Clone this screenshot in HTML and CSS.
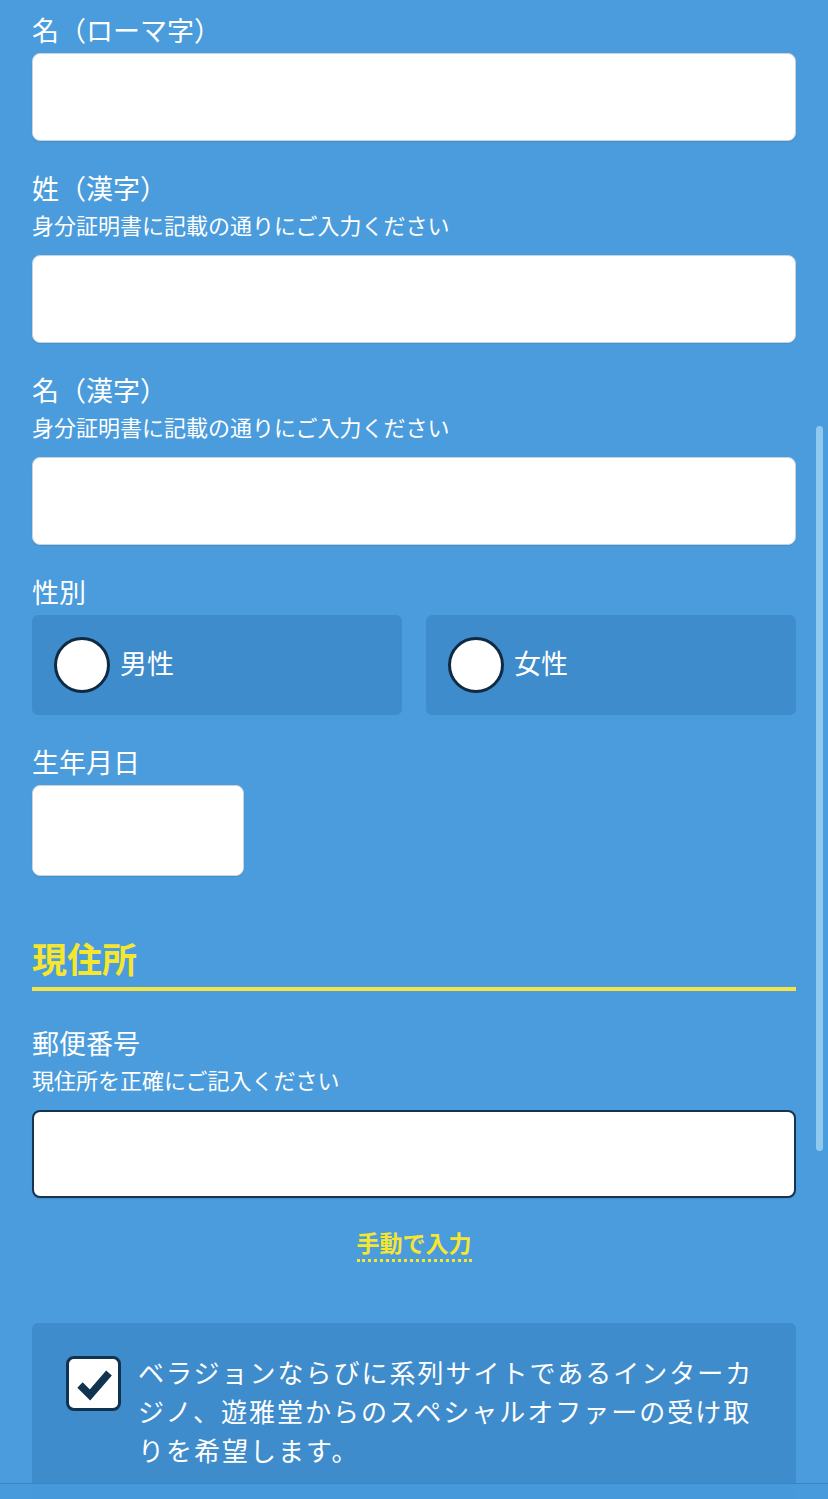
FILE: index.html
```html
<!DOCTYPE html>
<html lang="ja">
<head>
    <meta charset="UTF-8">
    <meta name="viewport" content="width=device-width, initial-scale=1.0">
    <title>登録フォーム</title>
    <link rel="stylesheet" href="styles.css">
</head>
<body>
    <main class="form">
        <div class="field">
            <label class="field-label" for="firstNameRoman">名（ローマ字）</label>
            <input type="text" id="firstNameRoman" class="text-input">
        </div>

        <div class="field">
            <label class="field-label" for="lastNameKanji">姓（漢字）</label>
            <p class="field-hint">身分証明書に記載の通りにご入力ください</p>
            <input type="text" id="lastNameKanji" class="text-input">
        </div>

        <div class="field">
            <label class="field-label" for="firstNameKanji">名（漢字）</label>
            <p class="field-hint">身分証明書に記載の通りにご入力ください</p>
            <input type="text" id="firstNameKanji" class="text-input">
        </div>

        <div class="field">
            <span class="field-label">性別</span>
            <div class="gender-options">
                <label class="radio-card">
                    <input type="radio" name="gender" value="male" class="radio-dot">
                    <span class="radio-text">男性</span>
                </label>
                <label class="radio-card">
                    <input type="radio" name="gender" value="female" class="radio-dot">
                    <span class="radio-text">女性</span>
                </label>
            </div>
        </div>

        <div class="field">
            <label class="field-label" for="birthday">生年月日</label>
            <input type="text" id="birthday" class="text-input date-input">
        </div>

        <h2 class="section-title">現住所</h2>

        <div class="field">
            <label class="field-label" for="postcode">郵便番号</label>
            <p class="field-hint">現住所を正確にご記入ください</p>
            <input type="text" id="postcode" class="text-input is-focused">
        </div>

        <div class="manual-entry">
            <a href="#" class="manual-link">手動で入力</a>
        </div>

        <label class="offer-box">
            <span class="check-box">
                <svg viewBox="0 0 49 49" width="49" height="49" aria-hidden="true">
                    <polyline points="11,26 21,36 40,14" fill="none" stroke="#123350" stroke-width="7.5"></polyline>
                </svg>
            </span>
            <span class="offer-text">ベラジョンならびに系列サイトであるインターカジノ、遊雅堂からのスペシャルオファーの受け取りを希望します。</span>
        </label>
    </main>

    <div class="scroll-thumb"></div>
    <div class="bottom-bar"></div>
</body>
</html>
```

FILE: styles.css
```css
body {
    margin: 0;
    background-color: #4a9cdc;
    color: #ffffff;
    font-family: "Noto Sans CJK JP", "Noto Sans", sans-serif;
}

.form {
    padding: 12px 32px 0;
}

.field {
    display: flex;
    flex-direction: column;
    margin-bottom: 29px;
}

.field-label {
    font-size: 27px;
    line-height: 36px;
    margin-bottom: 5px;
}

.field-hint {
    font-size: 22px;
    line-height: 30px;
    margin: -2px 0 16px;
}

.text-input {
    box-sizing: border-box;
    height: 88px;
    width: 100%;
    margin: 0;
    background-color: #fff;
    border: 1px solid #c9d3dc;
    border-radius: 8px;
    font-size: 26px;
    padding: 0 20px;
    box-shadow: 0 1px 1px rgba(0, 0, 0, 0.08);
}

.text-input.is-focused {
    border: 2px solid #163350;
}

.date-input {
    width: 212px;
    height: 91px;
}

.gender-options {
    display: grid;
    grid-template-columns: 1fr 1fr;
    gap: 24px;
}

.radio-card {
    display: flex;
    align-items: center;
    gap: 10px;
    height: 100px;
    padding-left: 22px;
    background-color: #3f8ccc;
    border-radius: 6px;
    font-size: 27px;
}

.radio-text {
    margin-top: -6px;
}

.radio-dot {
    appearance: none;
    margin: 0;
    width: 56px;
    height: 56px;
    box-sizing: border-box;
    border: 3px solid #0f2a43;
    border-radius: 50%;
    background-color: #fff;
}

.section-title {
    margin: 59px 0 34px;
    padding-bottom: 6px;
    border-bottom: 4px solid #f4e544;
    color: #f7e62f;
    font-size: 35px;
    line-height: 46px;
    font-weight: 700;
}

.manual-entry {
    text-align: center;
    margin-top: 28px;
}

.manual-link {
    display: inline-block;
    color: #f7e62f;
    font-size: 23px;
    line-height: 30px;
    font-weight: 700;
    text-decoration: none;
    padding-bottom: 2px;
    border-bottom: 3px dotted #f7e62f;
}

.offer-box {
    display: flex;
    align-items: flex-start;
    gap: 17px;
    margin-top: 61px;
    padding: 29px 40px 30px 34px;
    background-color: #3f8ccc;
    border-radius: 6px 6px 0 0;
}

.check-box {
    flex: none;
    display: flex;
    align-items: center;
    justify-content: center;
    width: 55px;
    height: 55px;
    margin-top: 4px;
    box-sizing: border-box;
    border: 3px solid #123350;
    border-radius: 8px;
    background-color: #fff;
}

.offer-text {
    font-size: 26px;
    line-height: 39px;
    letter-spacing: 2px;
}

.scroll-thumb {
    position: fixed;
    top: 426px;
    right: 5px;
    width: 7px;
    height: 725px;
    border-radius: 4px;
    background-color: #90c9f0;
}

.bottom-bar {
    position: fixed;
    left: 0;
    right: 0;
    bottom: 0;
    height: 15px;
    background-color: rgba(70, 154, 219, 0.92);
    border-top: 1px solid #3a86c5;
}
```
